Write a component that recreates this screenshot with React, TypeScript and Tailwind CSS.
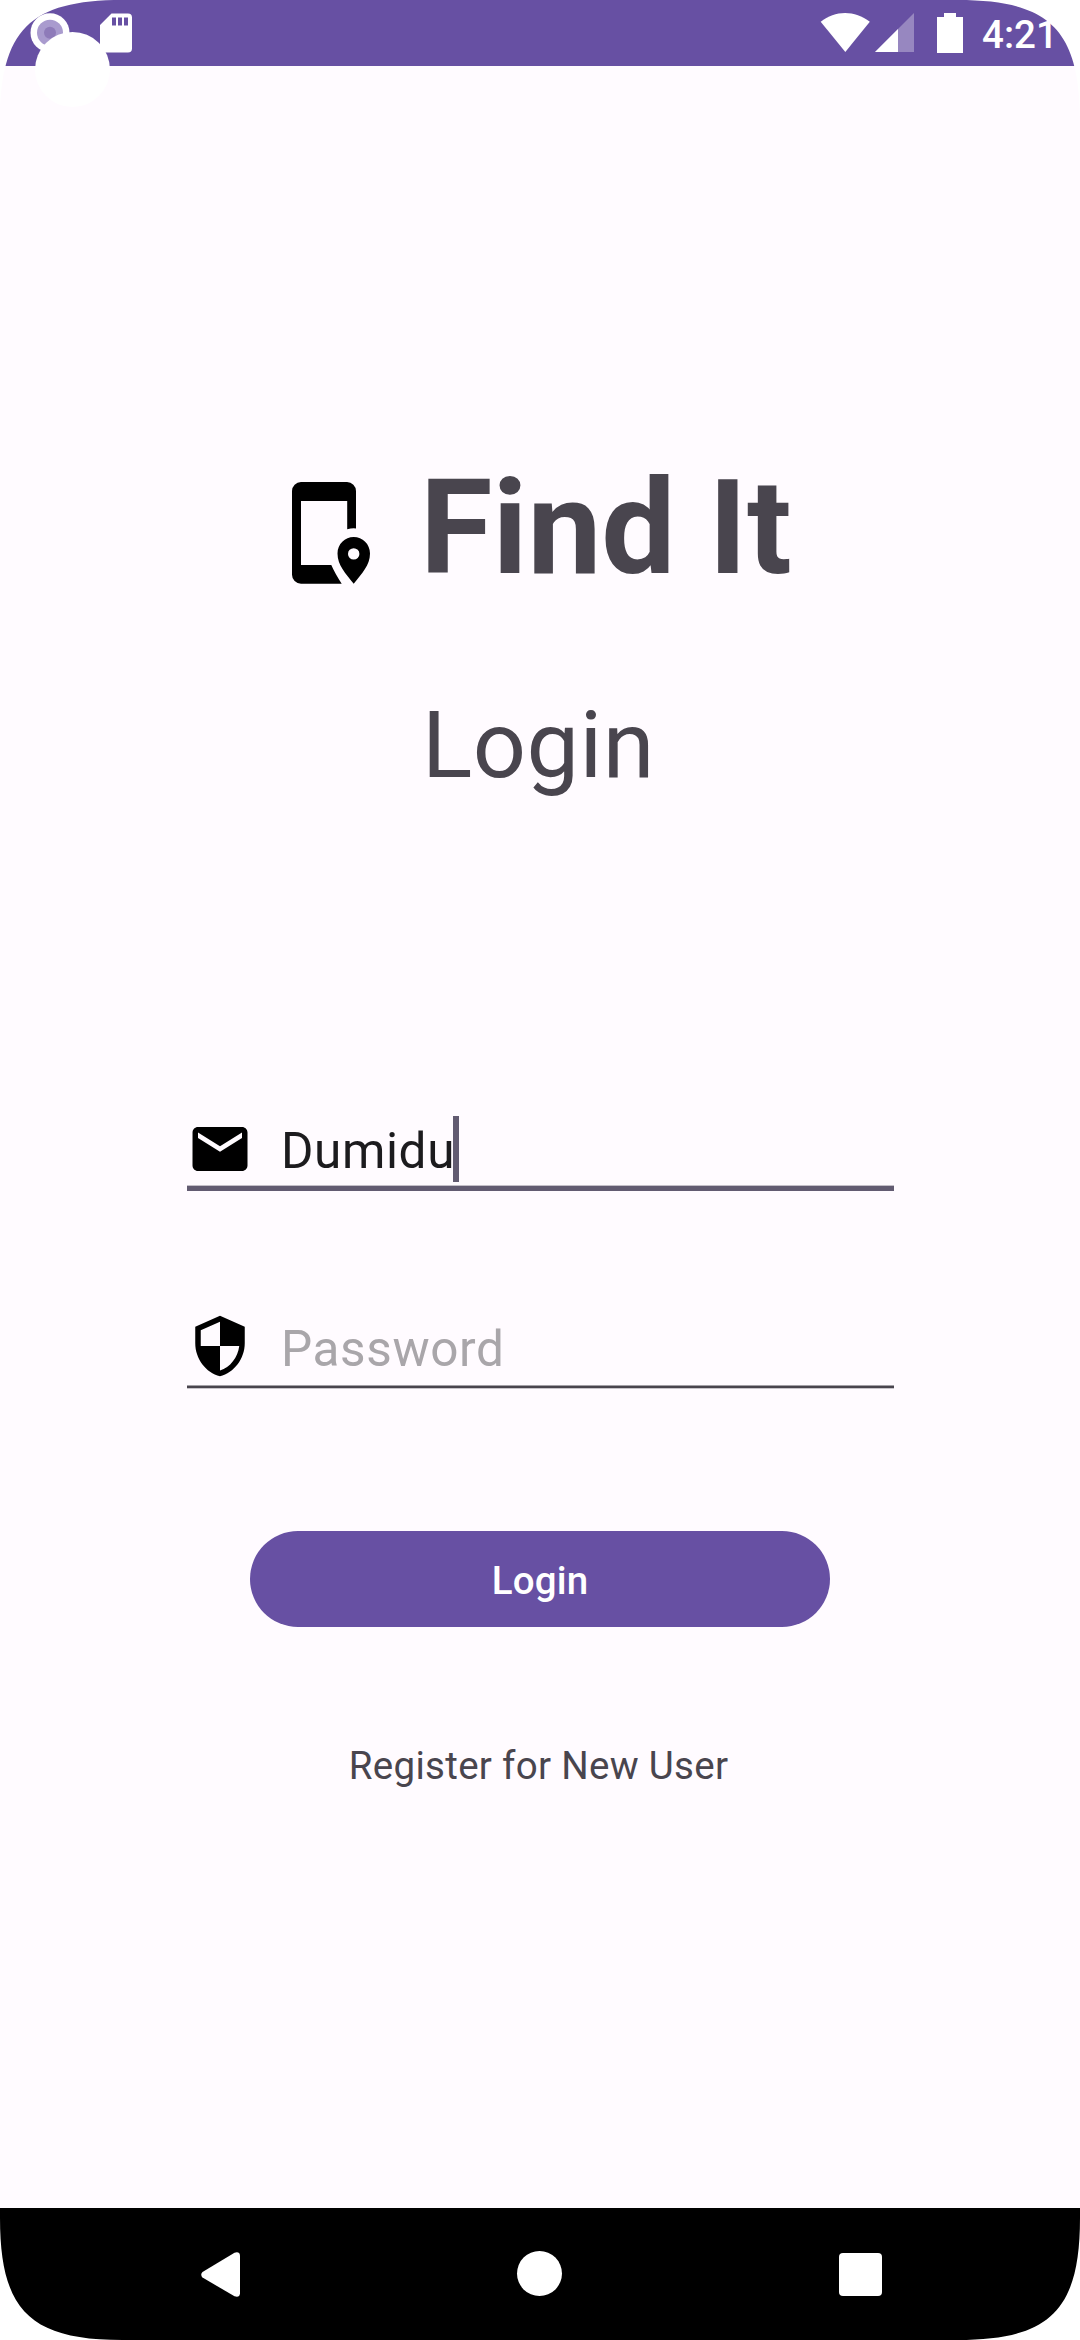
import React from "react";

const FONT = "font-['Roboto',sans-serif]";

function ScreenCorner({ className }: { className: string }) {
  return (
    <svg className={`absolute size-32 ${className}`} viewBox="0 0 128 128" fill="#fff" aria-hidden="true">
      <path d="M0 0H122C30 0 0 30 0 122Z" />
    </svg>
  );
}

function StatusBar() {
  return (
    <header className="relative flex h-[66px] items-start bg-[#6750a3] pl-[30px] text-white">
      <svg className="mt-[13px] size-[40px]" viewBox="0 0 40 40" aria-hidden="true">
        <circle cx="20" cy="19.7" r="19.5" fill="#fff" />
        <circle cx="20" cy="19.7" r="13" fill="#a99bce" />
        <circle cx="20" cy="19.7" r="6" fill="#8e7bb9" />
      </svg>
      <svg className="mt-[13px] ml-[30px] h-[40px] w-[32px]" viewBox="0 0 32 40" aria-hidden="true">
        <path
          fill="#fff"
          fillRule="evenodd"
          d="M11.5.5H28a4 4 0 0 1 4 4v31a4 4 0 0 1-4 4H4a4 4 0 0 1-4-4V12Zm.5 4v8h4v-8Zm6 0v8h4v-8Zm6 0v8h4v-8Z"
        />
      </svg>
      <svg className="mt-[13px] ml-auto h-[39px] w-[50px]" viewBox="0 0 50 39" aria-hidden="true">
        <path fill="#fff" d="M.7 8.8C15-2.9 35-2.9 49.8 8.8L25.3 39Z" />
      </svg>
      <svg className="mt-[13px] ml-[5px] size-[39px]" viewBox="0 0 39 39" aria-hidden="true">
        <path fill="#9787c0" d="M39 0V39H0Z" />
        <path fill="#fff" d="M23 16V39H0Z" />
      </svg>
      <svg className="mt-[13px] ml-[23px] h-[40px] w-[26px]" viewBox="0 0 26 40" aria-hidden="true">
        <path fill="#fff" d="M7 0H19V4H26V40H0V4H7Z" />
      </svg>
      <span className="mt-[11px] ml-[19px] w-[98px] text-[38.5px] leading-[48px] font-medium">4:21</span>
    </header>
  );
}

function PhoneLocationIcon() {
  return (
    <svg className="mt-[20px] h-[102px] w-[78px]" viewBox="0 0 78 102" aria-hidden="true">
      <path
        fillRule="evenodd"
        d="M9 0H55a9 9 0 0 1 9 9V46.500Q60 46 55.200 47.300V19H9V83H39.300Q43 91.500 49.700 101.700H9a9 9 0 0 1-9-9V9a9 9 0 0 1 9-9Z"
      />
      <path
        fillRule="evenodd"
        d="M61.700 55C70.500 55 78 62 78 71.500C78 83 70 91.500 61.700 101.700C53.500 91.500 45.500 83 45.500 71.500C45.500 62 53 55 61.700 55Zm0 11.200a5.700 5.700 0 1 0 0 11.400a5.700 5.700 0 1 0 0-11.400Z"
      />
    </svg>
  );
}

function MailIcon() {
  return (
    <svg className="size-[66px]" viewBox="0 0 24 24" aria-hidden="true">
      <path d="M20 4H4c-1.100 0-1.990.9-1.990 2L2 18c0 1.100.9 2 2 2h16c1.100 0 2-.9 2-2V6c0-1.100-.9-2-2-2zm0 4l-8 5-8-5V6l8 5 8-5v2z" />
    </svg>
  );
}

function ShieldIcon() {
  return (
    <svg className="mt-[2px] size-[66px] text-black" viewBox="0 0 24 24" fill="currentColor" aria-hidden="true">
      <path d="M12 1L3 5v6c0 5.550 3.840 10.740 9 12 5.160-1.260 9-6.450 9-12V5l-9-4zm0 10.990h7c-.53 4.120-3.280 7.790-7 8.940V12H5V6.300l7-3.110v8.800z" />
    </svg>
  );
}

function NavBar() {
  return (
    <nav className="flex h-[132px] items-start bg-black">
      <svg className="mt-[44px] ml-[201px] h-[45px] w-[39px]" viewBox="0 0 39 45" aria-hidden="true">
        <path
          fill="#fff"
          d="M1.500 20L33.500.7Q38.500-1 39 3.500V41.500Q38.500 46 33.500 44.300L1.500 25.500Q-1 22.700 1.500 20Z"
        />
      </svg>
      <div className="mt-[43px] ml-[277px] size-[45px] rounded-full bg-white" />
      <div className="mt-[45px] ml-[277px] h-[43px] w-[43px] rounded-[4px] bg-white" />
    </nav>
  );
}

export default function App() {
  return (
    <div className={`relative flex h-[2340px] w-[1080px] flex-col overflow-hidden bg-[#fffbff] text-[#49454e] ${FONT}`}>
      <StatusBar />
      <main className="flex flex-1 flex-col">
        <div className="mt-[396px] flex items-start pl-[292px]">
          <span className="text-black">
            <PhoneLocationIcon />
          </span>
          <h1 className="ml-[50px] text-[132px] leading-[132px] font-bold whitespace-nowrap">Find It</h1>
        </div>
        <h2 className="mt-[104px] ml-[422px] text-[93.5px] leading-[94px] tracking-[0.45px]">Login</h2>

        <div className="mt-[324px] ml-[187px] flex h-[75px] w-[707px] border-b-[5px] border-[#625b71] text-[#1c1b1e] shadow-[inset_0_-1px_0_#c4bfc8]">
          <MailIcon />
          <span className="mt-[6px] ml-[28px] text-[49.5px] leading-[58px] tracking-[0.6px]">Dumidu</span>
          <span className="-ml-[2px] h-[66px] w-[6px] bg-[#625b71]" />
        </div>

        <div className="mt-[120px] ml-[187px] flex h-[77px] w-[707px] border-b-2 border-[#49454e] text-[#a9a6aa] shadow-[inset_0_-1px_0_#a3a0a6,0_1px_0_#c8c4ca]">
          <ShieldIcon />
          <span className="mt-[9px] ml-[28px] text-[49.5px] leading-[58px] tracking-[0.6px]">Password</span>
        </div>

        <button className="mt-[143px] ml-[250px] h-[96px] w-[580px] rounded-full bg-[#6750a3] pt-[3px] text-[38.5px] leading-[46px] font-medium tracking-[0.2px] text-white">
          Login
        </button>
        <a className="mt-[116px] mr-[3px] text-center text-[38.5px] leading-[46px] tracking-[0.3px]">
          Register for New User
        </a>
      </main>
      <NavBar />
      <div className="absolute top-[32px] left-[35px] size-[75px] rounded-full bg-white" />
      <ScreenCorner className="top-0 left-0" />
      <ScreenCorner className="top-0 right-0 -scale-x-100" />
      <ScreenCorner className="bottom-0 left-0 -scale-y-100" />
      <ScreenCorner className="right-0 bottom-0 -scale-100" />
    </div>
  );
}
